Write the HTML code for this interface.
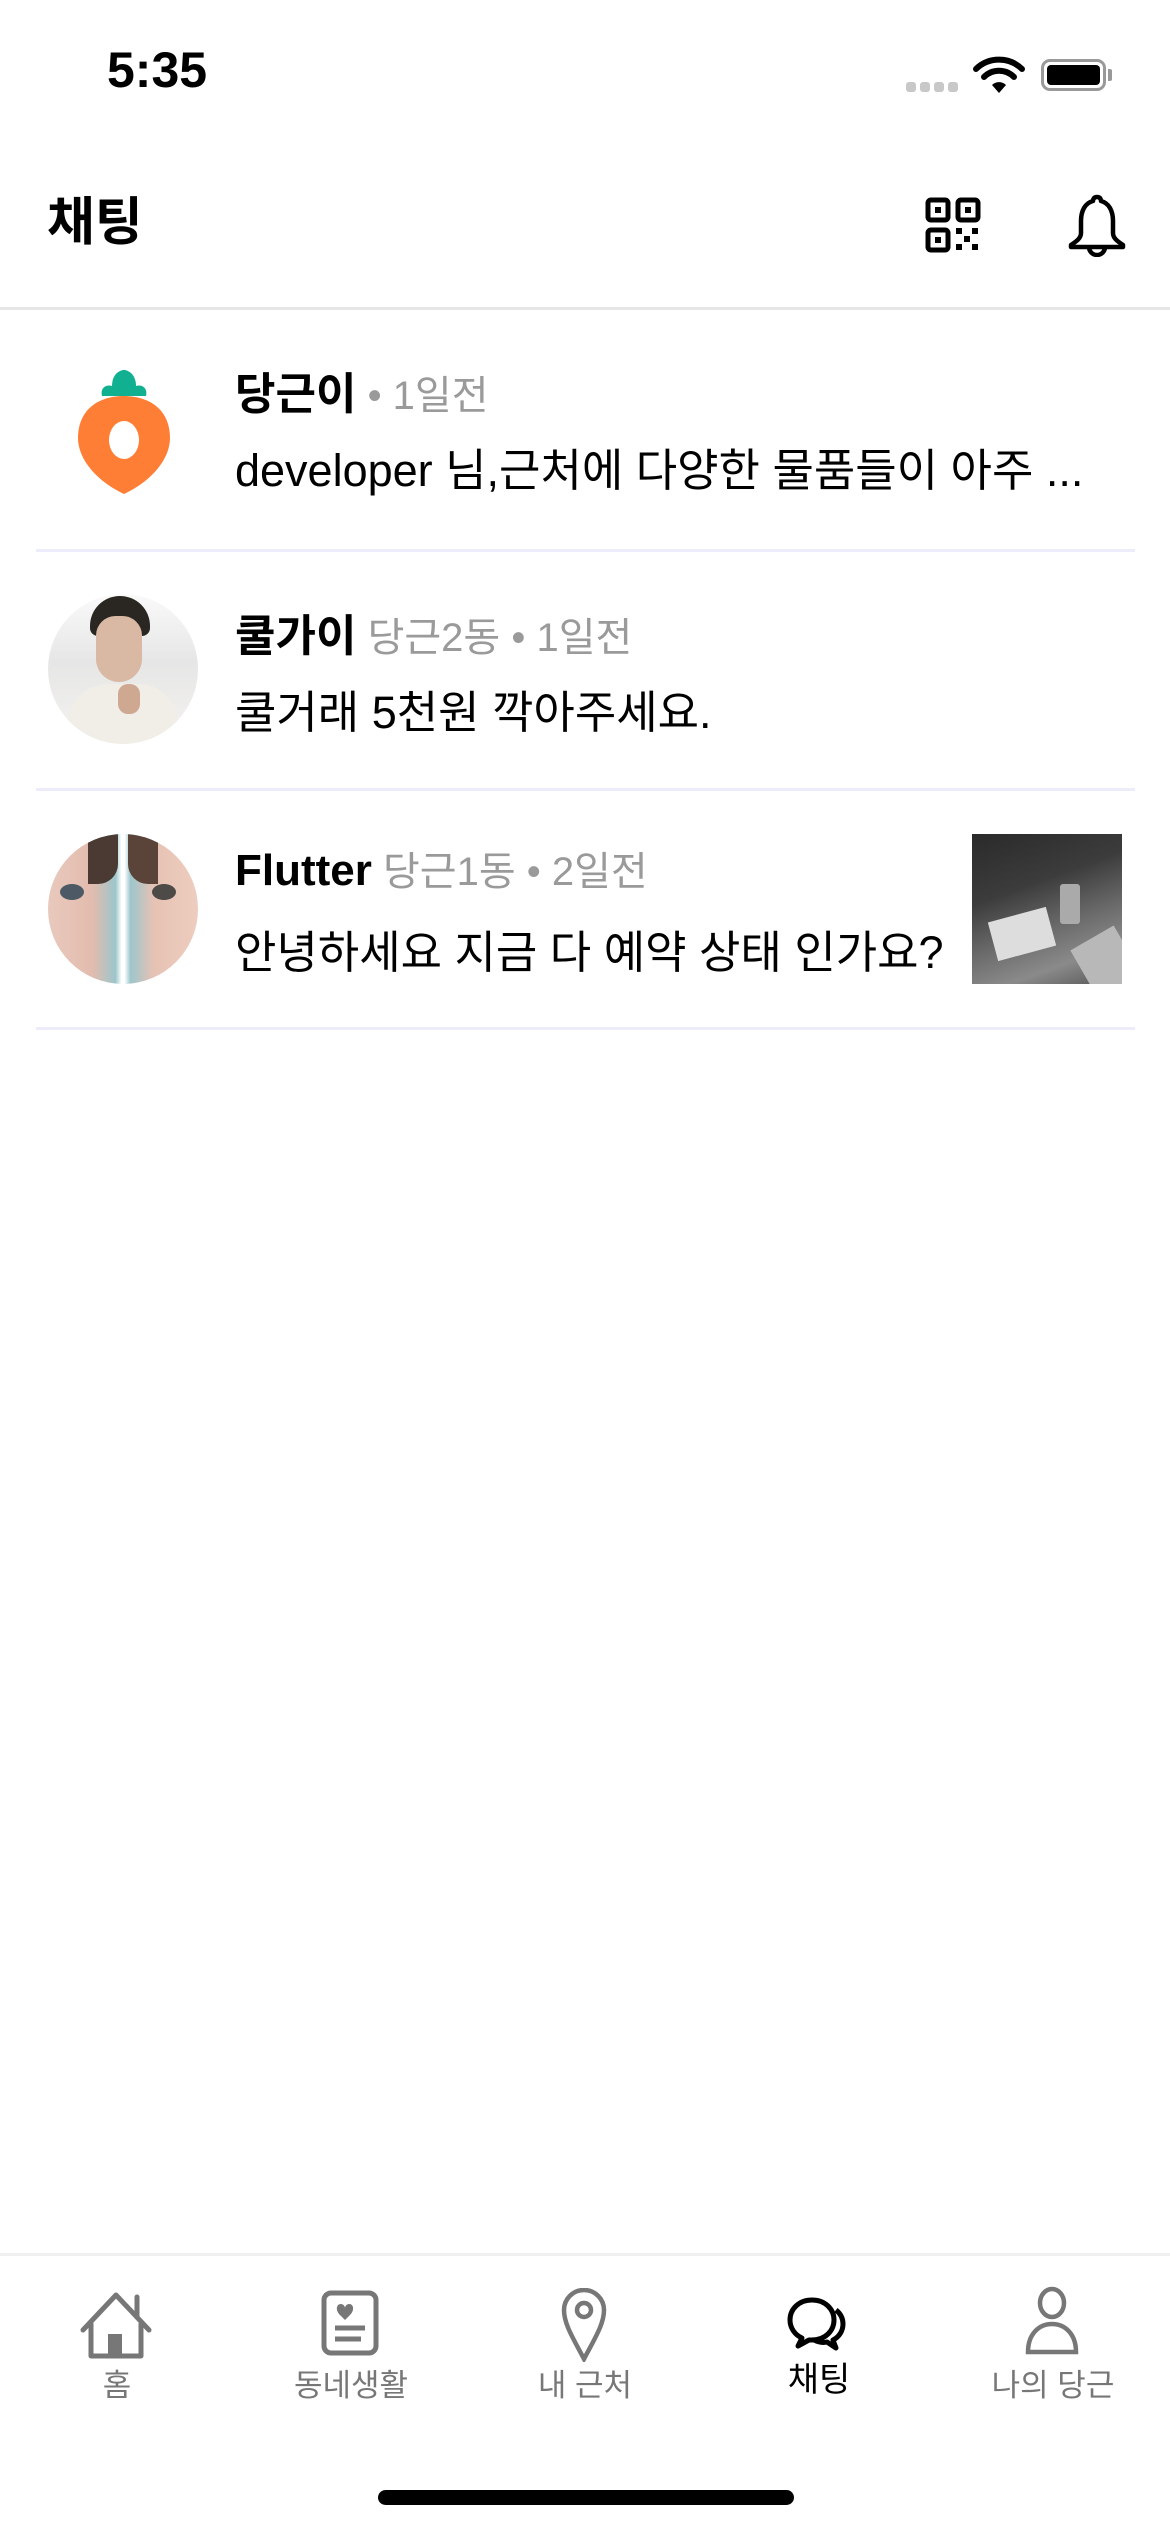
<!DOCTYPE html>
<html><head><meta charset="utf-8"><style>
*{margin:0;padding:0;box-sizing:border-box}
body{width:1170px;height:2532px;background:#fff;position:relative;overflow:hidden;font-family:"Liberation Sans","Noto Sans CJK KR",sans-serif;color:#000}
.a{position:absolute}
.name{font-weight:700;font-size:44px}
.sub{color:#9a9a9a;font-size:40px;font-weight:400}
.msg{font-size:45px;white-space:nowrap}
.div{position:absolute;left:36px;width:1099px;height:3px;background:#ececfb}
.lab{position:absolute;top:2360px;width:234px;text-align:center;font-size:31px;color:#777}
</style></head><body>
<div class="a" style="left:107px;top:41px;font-size:50px;font-weight:700">5:35</div>
<div class="a" style="left:906px;top:82px;width:52px;height:10px">
 <span class="a" style="left:0;width:10px;height:10px;border-radius:3px;background:#c8c8c8"></span>
 <span class="a" style="left:14px;width:10px;height:10px;border-radius:3px;background:#c8c8c8"></span>
 <span class="a" style="left:28px;width:10px;height:10px;border-radius:3px;background:#c8c8c8"></span>
 <span class="a" style="left:42px;width:10px;height:10px;border-radius:3px;background:#c8c8c8"></span>
</div>
<svg class="a" style="left:973px;top:56px" width="52" height="38" viewBox="0 0 52 38"><path d="M3 13a33 33 0 0 1 46 0" stroke="#000" stroke-width="6" fill="none" stroke-linecap="round"/><path d="M11 21a21 21 0 0 1 30 0" stroke="#000" stroke-width="6" fill="none" stroke-linecap="round"/><path d="M19 29l7 8 7-8a10 10 0 0 0-14 0z" fill="#000"/></svg>
<div class="a" style="left:1041px;top:59px;width:65px;height:32px;border:3px solid #999;border-radius:9px"><div style="margin:3px;height:20px;background:#000;border-radius:4px"></div></div>
<div class="a" style="left:1108px;top:69px;width:4px;height:12px;background:#999;border-radius:0 2px 2px 0"></div>

<div class="a" style="left:47px;top:180px;font-size:52px;font-weight:700">채팅</div>
<svg class="a" style="left:925px;top:197px" width="56" height="56" viewBox="0 0 56 56" fill="none" stroke="#000" stroke-width="5"><rect x="3" y="3" width="20" height="20" rx="3"/><rect x="33" y="3" width="20" height="20" rx="3"/><rect x="3" y="33" width="20" height="20" rx="3"/><g fill="#000" stroke="none"><rect x="31" y="31" width="6" height="6"/><rect x="47" y="31" width="6" height="6"/><rect x="39" y="39" width="6" height="6"/><rect x="31" y="47" width="6" height="6"/><rect x="47" y="47" width="6" height="6"/><rect x="10" y="10" width="6" height="6"/><rect x="40" y="10" width="6" height="6"/><rect x="10" y="40" width="6" height="6"/></g></svg>
<svg class="a" style="left:1066px;top:193px" width="62" height="64" viewBox="0 0 62 64" fill="none" stroke="#000" stroke-width="4.5" stroke-linejoin="round"><path d="M31 4c-3 0-4 2-4 4-8 2-12 10-12 20v12c0 5-4 8-10 12v2h52v-2c-6-4-10-7-10-12V28c0-10-4-18-12-20 0-2-1-4-4-4z"/><path d="M23 54a8 8 0 0 0 16 0"/></svg>
<div class="a" style="left:0;top:307px;width:1170px;height:3px;background:#e6e6e6"></div>

<!-- row1 -->
<svg class="a" style="left:74px;top:368px" width="100" height="126" viewBox="0 0 100 126"><path d="M38 18c0-12 8-16 12-16s12 4 12 16c6-2 12 2 10 10H28c-2-8 4-12 10-10z" fill="#10b090"/><path d="M50 28c26 0 46 14 46 42 0 22-20 44-46 56C24 114 4 92 4 70 4 42 24 28 50 28z" fill="#ff7e36"/><ellipse cx="50" cy="72" rx="15" ry="19" fill="#fff"/></svg>
<div class="a" style="left:235px;top:358px;white-space:nowrap"><span class="name">당근이</span><span class="sub"> • 1일전</span></div>
<div class="a msg" style="left:235px;top:434px">developer 님,근처에 다양한 물품들이 아주 ...</div>
<div class="div" style="top:549px"></div>

<!-- row2 -->
<div class="a" style="left:48px;top:594px;width:150px;height:150px;border-radius:50%;overflow:hidden;background:linear-gradient(180deg,#fafafa 0%,#e6e6e6 45%,#f4f3f0 100%)">
 <div class="a" style="left:42px;top:2px;width:60px;height:40px;border-radius:30px 30px 8px 8px;background:#2a2622"></div>
 <div class="a" style="left:48px;top:22px;width:46px;height:66px;border-radius:22px 22px 26px 26px;background:#d9b8a4"></div>
 <div class="a" style="left:20px;top:90px;width:110px;height:80px;border-radius:40px 40px 0 0;background:#f1eee8"></div>
 <div class="a" style="left:70px;top:90px;width:22px;height:30px;border-radius:10px;background:#cfa892"></div>
</div>
<div class="a" style="left:235px;top:600px;white-space:nowrap"><span class="name">쿨가이</span><span class="sub"> 당근2동 • 1일전</span></div>
<div class="a msg" style="left:235px;top:676px">쿨거래 5천원 깍아주세요.</div>
<div class="div" style="top:788px"></div>

<!-- row3 -->
<div class="a" style="left:48px;top:834px;width:150px;height:150px;border-radius:50%;overflow:hidden;background:linear-gradient(90deg,#e9c9bd 0%,#e2bcae 30%,#9cc6cc 45%,#fff 49%,#fff 51%,#9cc6cc 55%,#e6c2b4 70%,#edcdbf 100%)">
 <div class="a" style="left:12px;top:50px;width:24px;height:16px;border-radius:50%;background:#4d5a66"></div>
 <div class="a" style="left:104px;top:50px;width:24px;height:16px;border-radius:50%;background:#4d4a48"></div>
 <div class="a" style="left:40px;top:0;width:30px;height:50px;background:#4a3a33;border-radius:0 0 20px 0"></div>
 <div class="a" style="left:80px;top:0;width:30px;height:50px;background:#5a4338;border-radius:0 0 0 20px"></div>
</div>
<div class="a" style="left:235px;top:839px;white-space:nowrap"><span class="name">Flutter</span><span class="sub"> 당근1동 • 2일전</span></div>
<div class="a msg" style="left:235px;top:916px">안녕하세요 지금 다 예약 상태 인가요?</div>
<div class="a" style="left:972px;top:834px;width:150px;height:150px;background:linear-gradient(160deg,#2a2a2a 0%,#3c3c3c 35%,#6a6a6a 60%,#8a8a8a 80%,#555 100%);overflow:hidden">
 <div class="a" style="left:20px;top:80px;width:60px;height:40px;background:#ddd;transform:rotate(-15deg)"></div>
 <div class="a" style="left:88px;top:50px;width:20px;height:40px;background:#aaa;border-radius:3px"></div>
 <div class="a" style="left:110px;top:100px;width:50px;height:60px;background:#b8b8b8;transform:rotate(-30deg)"></div>
</div>
<div class="div" style="top:1027px"></div>

<!-- bottom nav -->
<div class="a" style="left:0;top:2253px;width:1170px;height:3px;background:#f0f0f0"></div>
<svg class="a" style="left:80px;top:2292px" width="72" height="68" viewBox="0 0 72 68" fill="none" stroke="#777" stroke-width="5" stroke-linejoin="round" stroke-linecap="round"><path d="M3 38L36 3l33 35"/><path d="M57 5v20"/><path d="M11 32v32h50V32"/><rect x="28" y="42" width="14" height="22" fill="#777" stroke="none"/></svg>
<svg class="a" style="left:321px;top:2290px" width="58" height="66" viewBox="0 0 58 66" fill="none" stroke="#777" stroke-width="5"><rect x="3" y="3" width="52" height="60" rx="7"/><path d="M20 14c-5 0-6 7 0 12l4 4 4-4c6-5 5-12 0-12-2 0-4 2-4 4 0-2-2-4-4-4z" fill="#777" stroke="none"/><path d="M14 38h30M14 49h26" stroke-width="5"/></svg>
<svg class="a" style="left:561px;top:2288px" width="46" height="74" viewBox="0 0 46 74" fill="none" stroke="#777" stroke-width="4.5"><path d="M23 71C12 50 3 36 3 22a20 20 0 0 1 40 0c0 14-9 28-20 49z"/><circle cx="23" cy="22" r="7"/></svg>
<svg class="a" style="left:786px;top:2296px" width="62" height="62" viewBox="0 0 62 62" fill="none" stroke="#000" stroke-width="5" stroke-linejoin="round"><path d="M26 4C13 4 4 13 4 24c0 8 5 15 12 18l-4 8 11-6c1 0 2 0 3 0 13 0 22-9 22-20S39 4 26 4z"/><path d="M50 14c5 4 7 9 7 14 0 7-4 13-10 16l3 8-9-6c-4 1-9 0-13-2"/></svg>
<svg class="a" style="left:1024px;top:2286px" width="56" height="72" viewBox="0 0 56 72" fill="none" stroke="#777" stroke-width="4.5"><ellipse cx="28" cy="17" rx="12" ry="14"/><path d="M4 66c0-18 11-28 24-28s24 10 24 28z"/></svg>
<div class="lab" style="left:0">홈</div>
<div class="lab" style="left:234px">동네생활</div>
<div class="lab" style="left:468px">내 근처</div>
<div class="lab" style="left:702px;top:2352px;color:#000;font-size:34px">채팅</div>
<div class="lab" style="left:936px">나의 당근</div>
<div class="a" style="left:378px;top:2490px;width:416px;height:15px;border-radius:8px;background:#000"></div>
</body></html>
